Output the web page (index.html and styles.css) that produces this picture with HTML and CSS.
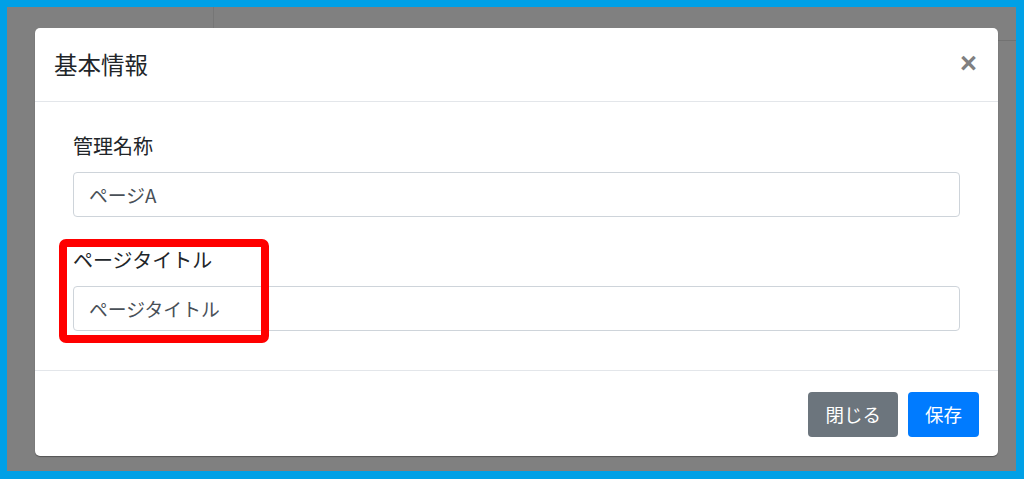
FILE: index.html
```html
<!DOCTYPE html>
<html lang="ja">
<head>
<meta charset="utf-8">
<title>基本情報</title>
<link rel="stylesheet" href="styles.css">
</head>
<body>
<div class="frame">
  <div class="bg-line-v"></div>
  <div class="bg-line-h"></div>
  <div class="modal">
    <div class="modal-header">
      <h5 class="modal-title">基本情報</h5>
      <span class="close">×</span>
    </div>
    <div class="modal-body">
      <div class="form-group">
        <label class="label">管理名称</label>
        <div class="input">ページA</div>
      </div>
      <div class="form-group highlight-group">
        <label class="label">ページタイトル</label>
        <div class="input">ページタイトル</div>
        <div class="highlight"></div>
      </div>
    </div>
    <div class="modal-footer">
      <button class="btn btn-secondary">閉じる</button>
      <button class="btn btn-primary">保存</button>
    </div>
  </div>
</div>
</body>
</html>
```

FILE: styles.css
```css
html, body {
  margin: 0;
  padding: 0;
}
body {
  background: #00a0e6;
  padding: 7px 8px 8px 7px;
  height: 479px;
  box-sizing: border-box;
  font-family: "Noto Sans CJK JP", "Noto Sans", sans-serif;
  color: #212529;
}
.frame {
  position: relative;
  background: #808080;
  height: 464px;
  width: 1009px;
  box-sizing: border-box;
  padding: 21px 0 0 28px;
}
.bg-line-v {
  position: absolute;
  left: 206px;
  top: 0;
  width: 1px;
  height: 21px;
  background: #767676;
}
.bg-line-h {
  position: absolute;
  right: 0;
  top: 33px;
  width: 18px;
  height: 1px;
  background: #727272;
}
.modal {
  position: relative;
  width: 963px;
  height: 428px;
  background: #fff;
  border-radius: 5px;
  box-shadow: 0 1px 1px rgba(0,0,0,0.35);
  display: flex;
  flex-direction: column;
}
.modal-header {
  height: 73px;
  flex: none;
  border-bottom: 1px solid #e3e6ea;
  display: flex;
  align-items: center;
  justify-content: space-between;
  padding: 0 21px 0 19px;
}
.modal-title {
  margin: 0;
  font-size: 23.5px;
  font-weight: 400;
  line-height: 1.5;
}
.close {
  font-family: "Liberation Sans", sans-serif;
  font-size: 29px;
  font-weight: 700;
  color: #808080;
  line-height: 1;
  margin-top: -2px;
}
.modal-body {
  padding: 29px 38px 0 38px;
  height: 268px;
  flex: none;
  box-sizing: border-box;
}
.form-group {
  display: flex;
  flex-direction: column;
}
.form-group + .form-group {
  margin-top: 28px;
}
.label {
  font-size: 20px;
  line-height: 30px;
  margin-bottom: 11px;
}
.input {
  height: 45px;
  box-sizing: border-box;
  border: 1px solid #ced4da;
  border-radius: 4px;
  padding: 0 15px;
  display: flex;
  align-items: center;
  font-size: 18.8px;
  color: #495057;
}
.highlight-group {
  position: relative;
}
.highlight {
  position: absolute;
  left: -14px;
  top: -6px;
  width: 210px;
  height: 104px;
  box-sizing: border-box;
  border: 8px solid #ff0000;
  border-radius: 7px;
}
.modal-footer {
  border-top: 1px solid #e3e6ea;
  display: flex;
  justify-content: flex-end;
  gap: 10px;
  padding: 21px 19px 0 0;
}
.btn {
  height: 45px;
  border: none;
  border-radius: 4px;
  padding: 0 17px;
  font-family: "Noto Sans CJK JP", "Noto Sans", sans-serif;
  font-size: 18.5px;
  color: #fff;
  line-height: 45px;
}
.btn-secondary {
  background: #6c757d;
}
.btn-primary {
  background: #007bff;
}
```
